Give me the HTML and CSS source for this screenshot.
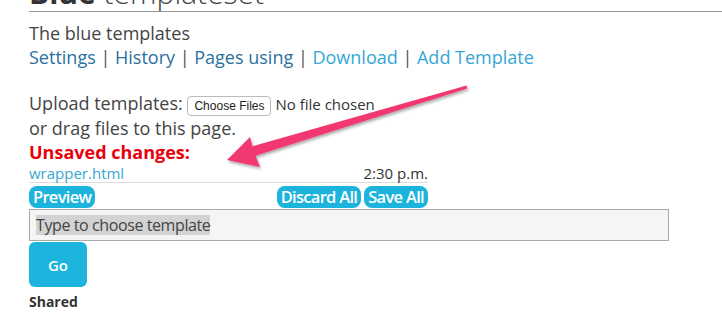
FILE: index.html
```html
<!DOCTYPE html>
<html lang="en">
<head>
    <meta charset="UTF-8">
    <meta name="viewport" content="width=device-width, initial-scale=1.0">
    <title>Blue templateset</title>
    <link rel="stylesheet" href="styles.css">
</head>
<body>
    <div class="page">
        <h1 class="title"><b>Blue</b> templateset</h1>
        <p class="desc">The blue templates</p>
        <p class="links">
            <a href="#" class="visited">Settings</a> |
            <a href="#" class="visited">History</a> |
            <a href="#" class="visited">Pages using</a> |
            <a href="#">Download</a> |
            <a href="#">Add Template</a>
        </p>
        <p class="upload">
            Upload templates: <input type="file" multiple class="file"><br>
            or drag files to this page.
        </p>
        <div class="unsaved">Unsaved changes:</div>
        <div class="changes">
            <div class="change-row">
                <a href="#">wrapper.html</a>
                <span>2:30 p.m.</span>
            </div>
            <div class="actions">
                <button class="pill">Preview</button>
                <div class="actions-right">
                    <button class="pill">Discard All</button>
                    <button class="pill">Save All</button>
                </div>
            </div>
        </div>
        <div class="chooser"><span class="hint">Type to choose template</span></div>
        <button class="go">Go</button>
        <h3 class="shared">Shared</h3>
    </div>

    <!-- annotation arrow drawn over the page -->
    <svg class="arrow" width="722" height="320" viewBox="0 0 722 320">
        <defs>
            <filter id="shadow" x="-10%" y="-30%" width="120%" height="160%">
                <feDropShadow dx="1" dy="2" stdDeviation="1.5" flood-color="#000" flood-opacity="0.35"/>
            </filter>
        </defs>
        <polygon filter="url(#shadow)" fill="#f2386f"
            points="227,160 250,137 252.5,146.2 466.6,85.6 467.4,88.4 255.5,155.8 260,167"/>
    </svg>
</body>
</html>
```

FILE: styles.css
```css
/* page base */
body {
    margin: 0;
    font-family: "Open Sans", "Liberation Sans", sans-serif;
    color: #444;
    background: #fff;
    overflow: hidden;
}

.page {
    padding-left: 29px;
    font-size: 18px;
    line-height: 24px;
}

a {
    color: #35a7d2;
    text-decoration: none;
}
a.visited {
    color: #2a70a0;
}

.title {
    margin: -25px 0 0 0;
    font-size: 30px;
    line-height: 36px;
    font-weight: 300;
    color: #444;
    border-bottom: 1px solid #999;
}
.title b {
    font-weight: 700;
    color: #333;
}

.desc {
    margin: 9px 0 0 0;
}

.links {
    margin: 0;
    color: #555;
}

.upload {
    margin: 22px 0 0 0;
}

.file {
    font-family: inherit;
    font-size: 15px;
    color: #333;
}
.file::file-selector-button {
    font-family: "Liberation Sans", sans-serif;
    font-size: 12px;
    background: #fff;
    border: 1px solid #bbb;
    border-radius: 4px;
    padding: 2px 6px;
    margin-right: 4px;
    color: #222;
}

.unsaved {
    color: #e8000d;
    font-weight: 700;
}

.changes {
    width: 399px;
}

.change-row {
    display: flex;
    justify-content: space-between;
    font-size: 15px;
    line-height: 18px;
    padding-bottom: 0;
    border-bottom: 1px solid #ddd;
    color: #333;
}

.actions {
    display: flex;
    justify-content: space-between;
    margin-top: 3px;
}
.actions-right {
    display: flex;
    gap: 3px;
}

.pill {
    background: #1cb4dc;
    color: #fff;
    border: none;
    border-radius: 8px;
    height: 22px;
    padding: 0 4px;
    font-family: "Open Sans", sans-serif;
    font-size: 16.5px;
    font-weight: 600;
    letter-spacing: -0.7px;
    line-height: 22px;
}

.chooser {
    width: 640px;
    height: 32px;
    box-sizing: border-box;
    margin-top: 1px;
    border: 1px solid #aaa;
    background: #f5f5f5;
    padding: 5px 6px;
    font-size: 16px;
    line-height: 20px;
    color: #444;
}
.hint {
    background: #d3d3d3;
    display: inline-block;
    letter-spacing: -0.4px;
}

.go {
    display: block;
    margin-top: 1px;
    width: 58px;
    height: 45px;
    background: #1cb4dc;
    color: #fff;
    border: none;
    border-radius: 6px;
    font-family: "Open Sans", sans-serif;
    font-size: 15px;
    font-weight: 600;
}

.shared {
    margin: 5px 0 0 0;
    font-size: 14px;
    font-weight: 700;
    color: #333;
    line-height: 20px;
}

.arrow {
    position: absolute;
    left: 0;
    top: 0;
    pointer-events: none;
}
```
